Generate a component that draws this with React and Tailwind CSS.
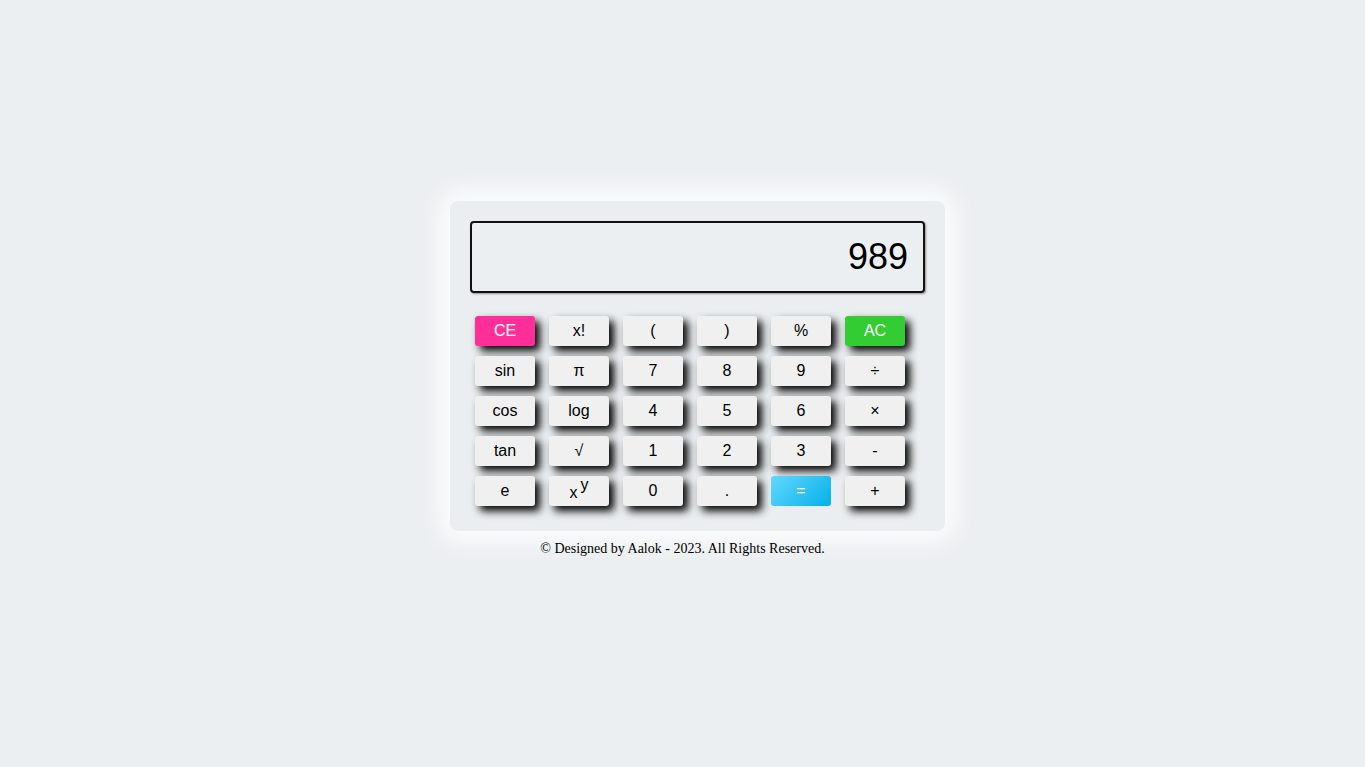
import React from "react";

const rows = [
  ["CE", "x!", "(", ")", "%", "AC"],
  ["sin", "π", "7", "8", "9", "÷"],
  ["cos", "log", "4", "5", "6", "×"],
  ["tan", "√", "1", "2", "3", "-"],
  ["e", "xy", "0", ".", "=", "+"],
];

function Key({ label }) {
  let tone = "bg-[#f0f0f0] text-black shadow-[5px_5px_8px_#000]";
  if (label === "CE") tone = "bg-[#ff2f9a] text-white shadow-[5px_5px_8px_#000]";
  if (label === "AC") tone = "bg-[#33cc33] text-white shadow-[5px_5px_8px_#000]";
  if (label === "=") tone = "bg-[linear-gradient(135deg,#62d8ff,#06b0e8)] text-white";

  return (
    <button className={`h-[30px] w-[60px] rounded-[3px] text-[16px] leading-none flex items-center justify-center ${tone}`}>
      {label === "xy" ? (
        <span className="flex items-start">
          <span className="mt-[3px]">x</span>
          <span className="ml-[3px] -mt-[5px]">y</span>
        </span>
      ) : (
        label
      )}
    </button>
  );
}

export default function App() {
  return (
    <div className="min-h-screen w-full bg-[#eceff1] pt-[201px] font-['Liberation_Sans',Arial,sans-serif]">
      <div className="flex flex-col items-center">
        <div className="ml-[30px] w-[495px] rounded-[8px] bg-[#ebeef0] p-[20px] shadow-[0_0_25px_8px_#ffffff]">
          <div className="h-[72px] w-full rounded-[4px] border-2 border-[#111] bg-[#eceff1] shadow-[1px_1px_2px_rgba(0,0,0,0.4)] flex items-center justify-end pr-[15px]">
            <span className="text-[36px] text-black">989</span>
          </div>
          <div className="mt-[23px] mb-[5px] pl-[5px] grid grid-cols-[repeat(6,60px)] gap-x-[14px] gap-y-[10px]">
            {rows.flat().map((k, i) => (
              <Key key={i} label={k} />
            ))}
          </div>
        </div>
        <p className="mt-[7px] text-[14px] text-black font-['Liberation_Serif','Times_New_Roman',serif]">
          © Designed by Aalok - 2023. All Rights Reserved.
        </p>
      </div>
    </div>
  );
}
